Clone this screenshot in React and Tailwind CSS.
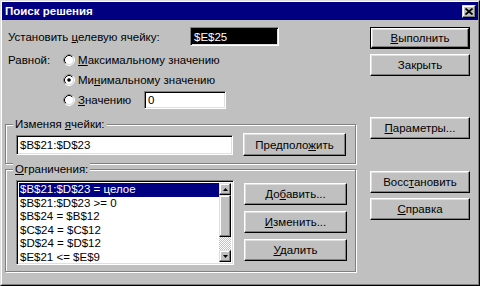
import React from "react";

function Btn({ children, def, className = "" }) {
  const inner = (
    <div className="h-full w-full flex items-center justify-center bg-[#c0c0c0] border border-t-white border-l-white border-r-black border-b-black shadow-[inset_-1px_-1px_0_#808080,inset_1px_1px_0_#dfdfdf]">
      <span>{children}</span>
    </div>
  );
  if (def) {
    return <div className={"border border-black " + className}>{inner}</div>;
  }
  return <div className={className}>{inner}</div>;
}

function Radio({ checked }) {
  return (
    <svg width="12" height="12" viewBox="0 0 12 12" className="shrink-0">
      <circle cx="6" cy="6" r="5.5" fill="none" stroke="#ffffff" strokeWidth="1" />
      <path d="M2.11 9.89 A5.5 5.5 0 0 1 9.89 2.11" fill="none" stroke="#808080" strokeWidth="1" />
      <circle cx="6" cy="6" r="4.5" fill="#ffffff" stroke="#dfdfdf" strokeWidth="1" />
      <path d="M2.82 9.18 A4.5 4.5 0 0 1 9.18 2.82" fill="none" stroke="#000000" strokeWidth="1" />
      {checked && <circle cx="6" cy="6" r="1.8" fill="#000000" />}
    </svg>
  );
}

const sunken =
  "border border-t-[#808080] border-l-[#808080] border-r-white border-b-white shadow-[inset_1px_1px_0_#000,inset_-1px_-1px_0_#dfdfdf]";
const etched = "border border-[#808080] shadow-[inset_1px_1px_0_#fff,1px_1px_0_#fff]";
const raised =
  "bg-[#c0c0c0] border border-t-[#dfdfdf] border-l-[#dfdfdf] border-r-black border-b-black shadow-[inset_-1px_-1px_0_#808080,inset_1px_1px_0_#fff]";

function ArrowBtn({ up }) {
  return (
    <div className={"h-[12px] w-full flex items-center justify-center " + raised}>
      <svg width="5" height="3" viewBox="0 0 5 3">
        {up ? <path d="M2.5 0 L5 3 L0 3 Z" fill="#000" /> : <path d="M0 0 L5 0 L2.5 3 Z" fill="#000" />}
      </svg>
    </div>
  );
}

export default function App() {
  const items = [
    "$B$21:$D$23 = целое",
    "$B$21:$D$23 >= 0",
    "$B$24 = $B$12",
    "$C$24 = $C$12",
    "$D$24 = $D$12",
    "$E$21 <= $E$9",
  ];
  return (
    <div className="w-[480px] h-[286px] bg-[#c0c0c0] border border-t-[#dfdfdf] border-l-[#dfdfdf] border-r-black border-b-black font-['Liberation_Sans',Arial,sans-serif] text-[11.5px] text-black leading-[14px] overflow-hidden">
      <div className="h-full border border-t-white border-l-white border-r-[#808080] border-b-[#808080] flex flex-col">
        {/* Title bar */}
        <div className="h-[18px] bg-[#000080] flex items-center justify-between pl-[3px] pr-[2px]">
          <span className="text-white font-bold text-[11.5px]">Поиск решения</span>
          <div className={"w-[14px] h-[13px] flex items-center justify-center " + raised}>
            <svg width="8" height="7" viewBox="0 0 8 7">
              <path d="M0.5 0.5 L7.5 6.5 M7.5 0.5 L0.5 6.5" stroke="#000" strokeWidth="1.8" />
            </svg>
          </div>
        </div>

        {/* Body */}
        <div className="flex flex-1">
          {/* Left column */}
          <div className="ml-[3px] w-[351px] flex flex-col">
            <div className="mt-[7px] h-[19px] flex items-center">
              <span className="w-[185px] pl-[3px]">
                Установить <u>ц</u>елевую ячейку:
              </span>
              <div className={"w-[89px] h-[19px] bg-black text-white flex items-center pl-[3px] " + sunken}>
                $E$25
              </div>
            </div>

            <div className="mt-[4px] flex flex-col">
              <div className="h-[20px] flex items-center">
                <span className="w-[58px] pl-[3px]">Равной:</span>
                <Radio />
                <span className="ml-[3px]">
                  <u>М</u>аксимальному значению
                </span>
              </div>
              <div className="h-[20px] flex items-center">
                <span className="w-[58px]" />
                <Radio checked />
                <span className="ml-[3px]">
                  Ми<u>н</u>имальному значению
                </span>
              </div>
              <div className="h-[20px] flex items-center">
                <span className="w-[58px]" />
                <Radio />
                <span className="ml-[3px] w-[66px]">
                  <u>З</u>начению
                </span>
                <div className={"w-[82px] h-[18px] bg-white flex items-center pl-[3px] " + sunken}>0</div>
              </div>
            </div>

            {/* Group 1 */}
            <div className={"relative mt-[14px] h-[40px] " + etched}>
              <span className="absolute -top-[8px] left-[7px] bg-[#c0c0c0] px-[2px]">
                Изменяя <u>я</u>чейки:
              </span>
              <div className="pt-[8px] pl-[10px] flex items-center h-[31px]">
                <div className={"w-[217px] h-[20px] bg-white flex items-center pl-[3px] " + sunken}>$B$21:$D$23</div>
                <Btn className="ml-[10px] w-[103px] h-[23px]">
                  Предполо<u>ж</u>ить
                </Btn>
              </div>
            </div>

            {/* Group 2 */}
            <div className={"relative mt-[5px] h-[103px] " + etched}>
              <span className="absolute -top-[8px] left-[7px] bg-[#c0c0c0] px-[2px]">
                <u>О</u>граничения:
              </span>
              <div className="pt-[10px] pl-[10px] flex">
                <div className={"w-[218px] h-[85px] bg-white flex p-[2px] " + sunken}>
                  <div className="flex-1 flex flex-col overflow-hidden">
                    {items.map((t, i) => (
                      <div
                        key={i}
                        className={
                          "h-[13.6px] leading-[13.6px] pl-[1px] whitespace-nowrap " +
                          (i === 0 ? "bg-[#000080] text-white" : "")
                        }
                      >
                        {t}
                      </div>
                    ))}
                  </div>
                  <div className="w-[12px] flex flex-col bg-[#e8e8e8]">
                    <ArrowBtn up />
                    <div className={"h-[42px] " + raised} />
                    <div className="flex-1 bg-[repeating-conic-gradient(#c0c0c0_0%_25%,#ffffff_0%_50%)] bg-[length:2px_2px]" />
                    <ArrowBtn />
                  </div>
                </div>
                <div className="ml-[10px] mt-[3px] flex flex-col gap-[6px]">
                  <Btn className="w-[103px] h-[22px]">
                    До<u>б</u>авить...
                  </Btn>
                  <Btn className="w-[103px] h-[22px]">
                    <u>И</u>зменить...
                  </Btn>
                  <Btn className="w-[103px] h-[22px]">
                    <u>У</u>далить
                  </Btn>
                </div>
              </div>
            </div>
          </div>

          {/* Right column */}
          <div className="ml-[14px] w-[100px] flex flex-col">
            <Btn def className="mt-[7px] h-[22px]">
              <u>В</u>ыполнить
            </Btn>
            <Btn className="mt-[5px] h-[22px]">Закрыть</Btn>
            <Btn className="mt-[41px] h-[22px]">
              <u>П</u>араметры...
            </Btn>
            <Btn className="mt-[32px] h-[22px]">
              Восс<u>т</u>ановить
            </Btn>
            <Btn className="mt-[5px] h-[22px]">
              <u>С</u>правка
            </Btn>
          </div>
        </div>
      </div>
    </div>
  );
}
